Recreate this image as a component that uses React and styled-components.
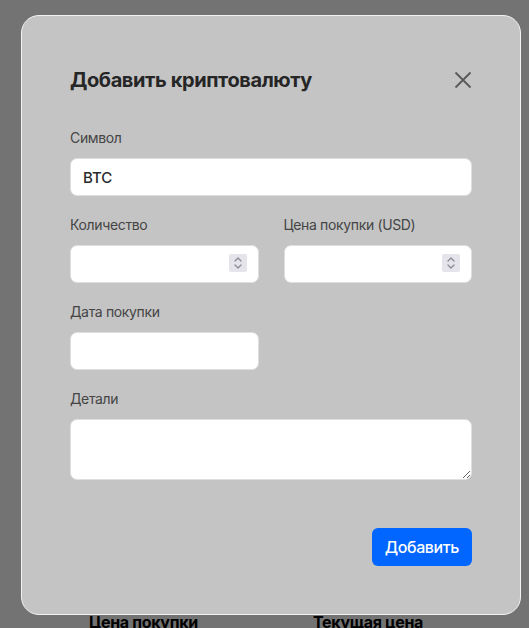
import React from 'react';
import styled, { createGlobalStyle } from 'styled-components';

const GlobalStyle = createGlobalStyle`
  html, body {
    margin: 0;
    padding: 0;
    background: #ffffff;
    font-family: Inter, "Noto Sans", "Liberation Sans", sans-serif;
    overflow: hidden;
  }
  * {
    box-sizing: border-box;
  }
`;

const Page = styled.div`
  min-height: 628px;
  padding-top: 612px;
`;

const TableHead = styled.div`
  display: grid;
  grid-template-columns: 224px 224px;
  padding-left: 89px;
`;

const HeadCell = styled.div`
  font-size: 16px;
  line-height: 20px;
  font-weight: 700;
  color: #000;
  letter-spacing: -0.02em;
`;

const Overlay = styled.div`
  position: fixed;
  inset: 0;
  background: rgba(0, 0, 0, 0.55);
  display: flex;
  align-items: flex-start;
  justify-content: flex-start;
  padding: 15px 0 0 21px;
`;

const Modal = styled.div`
  width: 500px;
  background: #c4c4c4;
  border: 1px solid #f2f2f2;
  border-radius: 18px;
  padding: 48px;
  display: flex;
  flex-direction: column;
`;

const Header = styled.div`
  display: flex;
  align-items: center;
  justify-content: space-between;
  height: 32px;
  margin-bottom: 33px;
`;

const Title = styled.h2`
  margin: 0;
  font-size: 20px;
  line-height: 32px;
  font-weight: 700;
  color: #262626;
  letter-spacing: -0.02em;
`;

const CloseButton = styled.button`
  width: 20px;
  height: 20px;
  padding: 0;
  margin-right: -1px;
  border: 0;
  background: transparent;
  color: #5a5a5a;
  display: flex;
  align-items: center;
  justify-content: center;
  cursor: pointer;
`;

const Form = styled.div`
  display: grid;
  grid-template-columns: 1fr 1fr;
  column-gap: 25px;
  row-gap: 20px;
`;

const Field = styled.label`
  display: flex;
  flex-direction: column;
  gap: 12px;
  grid-column: ${(p) => (p.$wide ? '1 / -1' : 'auto')};
`;

const Label = styled.span`
  font-size: 14px;
  line-height: 17px;
  color: #454545;
  letter-spacing: -0.025em;
`;

const InputWrap = styled.div`
  position: relative;
`;

const Input = styled.input`
  width: 100%;
  height: 38px;
  border: 1px solid #dedede;
  border-radius: 7px;
  background: #fff;
  padding: 0 12px;
  font-family: inherit;
  font-size: 15px;
  font-weight: 500;
  color: #2a2a2a;
  outline: none;
  -moz-appearance: textfield;
  &::-webkit-outer-spin-button,
  &::-webkit-inner-spin-button {
    -webkit-appearance: none;
    margin: 0;
  }
`;

const Stepper = styled.span`
  position: absolute;
  right: 12px;
  top: 9px;
  width: 18px;
  height: 18px;
  border-radius: 2px;
  background: #e4e4ea;
  display: flex;
  align-items: center;
  justify-content: center;
  pointer-events: none;
`;

const TextArea = styled.textarea`
  width: 100%;
  height: 61px;
  border: 1px solid #dedede;
  border-radius: 7px;
  background: #fff;
  padding: 8px 12px;
  font-family: inherit;
  font-size: 15px;
  color: #222;
  outline: none;
  display: block;
`;

const Footer = styled.div`
  display: flex;
  justify-content: flex-end;
  margin-top: 48px;
`;

const SubmitButton = styled.button`
  height: 38px;
  padding: 0 13px;
  border: 0;
  border-radius: 6px;
  background: #0066ff;
  color: #fff;
  font-family: inherit;
  font-size: 16px;
  font-weight: 500;
  letter-spacing: -0.025em;
  cursor: pointer;
`;

function CloseIcon() {
  return (
    <svg width="18" height="18" viewBox="0 0 18 18" fill="none">
      <path d="M1.5 1.5L16.5 16.5M16.5 1.5L1.5 16.5" stroke="currentColor" strokeWidth="1.9" />
    </svg>
  );
}

function StepperIcon() {
  return (
    <svg width="10" height="14" viewBox="0 0 10 14" fill="none">
      <path d="M2 5L5 2L8 5M2 9L5 12L8 9" stroke="#8a8a96" strokeWidth="1.3" strokeLinecap="round" strokeLinejoin="round" />
    </svg>
  );
}

function NumberInput() {
  return (
    <InputWrap>
      <Input type="number" />
      <Stepper>
        <StepperIcon />
      </Stepper>
    </InputWrap>
  );
}

export default function App() {
  return (
    <>
      <GlobalStyle />
      <Page>
        <TableHead>
          <HeadCell>Цена покупки</HeadCell>
          <HeadCell>Текущая цена</HeadCell>
        </TableHead>
      </Page>
      <Overlay>
        <Modal>
          <Header>
            <Title>Добавить криптовалюту</Title>
            <CloseButton aria-label="Закрыть">
              <CloseIcon />
            </CloseButton>
          </Header>
          <Form>
            <Field $wide>
              <Label>Символ</Label>
              <Input type="text" defaultValue="BTC" />
            </Field>
            <Field>
              <Label>Количество</Label>
              <NumberInput />
            </Field>
            <Field>
              <Label>Цена покупки (USD)</Label>
              <NumberInput />
            </Field>
            <Field>
              <Label>Дата покупки</Label>
              <Input type="text" />
            </Field>
            <Field $wide>
              <Label>Детали</Label>
              <TextArea />
            </Field>
          </Form>
          <Footer>
            <SubmitButton>Добавить</SubmitButton>
          </Footer>
        </Modal>
      </Overlay>
    </>
  );
}
